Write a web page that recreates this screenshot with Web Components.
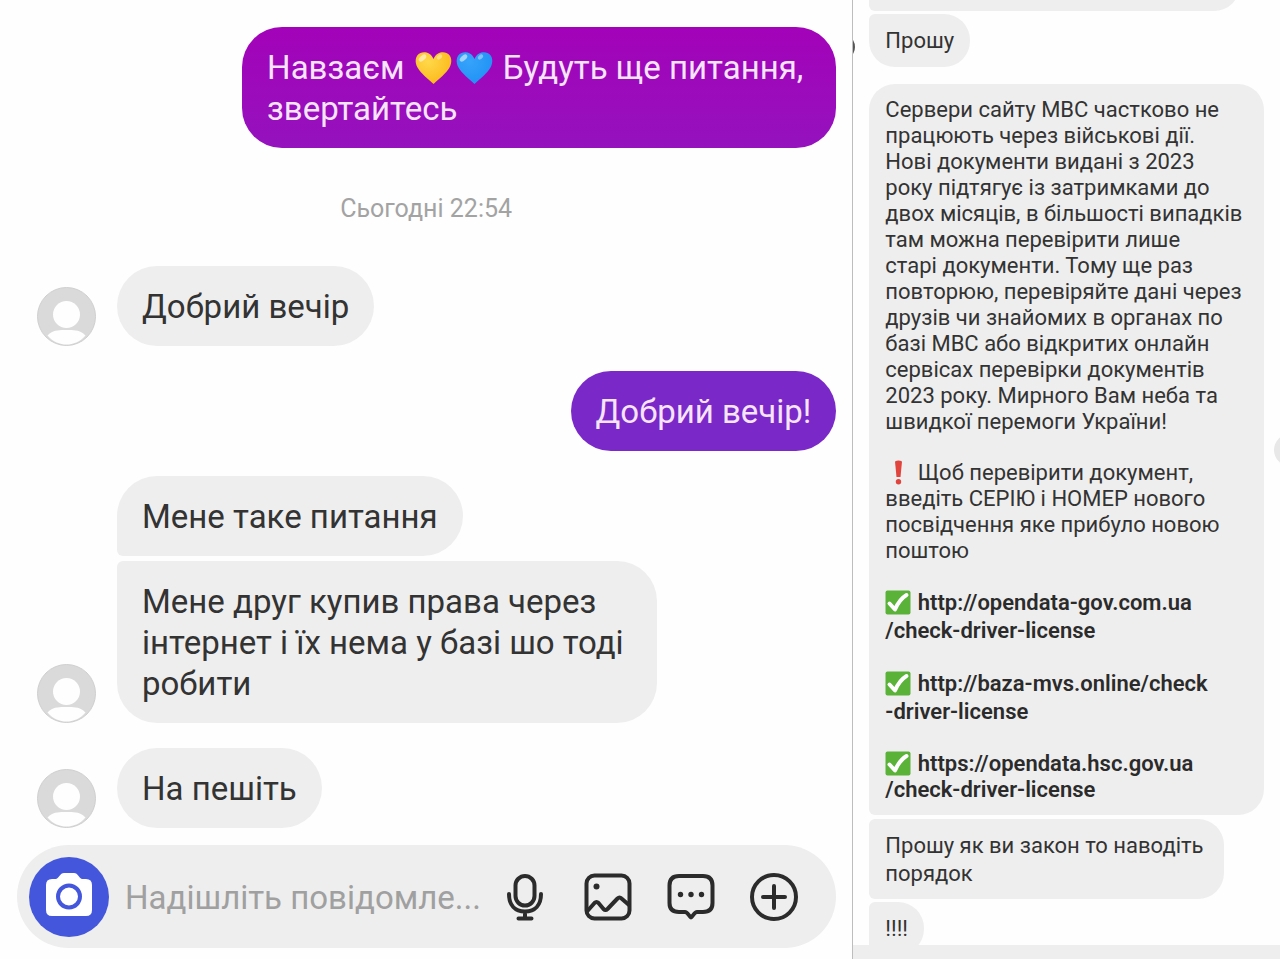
<!DOCTYPE html>
<html lang="uk">
<head>
<meta charset="utf-8">
<meta name="viewport" content="width=device-width, initial-scale=1">
<title>Листування</title>
<style>
  body { margin: 0; background: #fefefe; font-family: Roboto, "Noto Sans", sans-serif; color: #333; }
</style>
</head>
<body>
<chat-app></chat-app>
<script>
const define = (name, html) => {
  const t = document.createElement('template');
  t.innerHTML = html;
  customElements.define(name, class extends HTMLElement {
    constructor() {
      super();
      this.attachShadow({ mode: 'open' }).append(t.content.cloneNode(true));
    }
  });
};

define('chat-bubble', `
  <style>
    :host { display: block; width: fit-content; box-sizing: border-box; background: #eee;
      white-space: nowrap; font-size: 33px; line-height: 41px; padding: 20px 25px 19px; border-radius: 40px; }
    :host([wrapped]) { padding-right: 33px; }
    :host([sent]) { align-self: flex-end; color: #f6e4fa; background: #7b28c8; }
    :host([sent="bright"]) { background: linear-gradient(#a302b9, #9512be); }
    :host([small]) { font-size: 22px; line-height: 28px; padding: 13px 16px 12px; border-radius: 26px; }
    :host([small][wrapped]) { padding: 13px 20px 11px 16px; }
    :host([small][long]) { line-height: 26px; width: auto; }
    :host([join~="top"]) { border-top-left-radius: 6px; }
    :host([join~="bottom"]) { border-bottom-left-radius: 6px; }
  </style><slot></slot>`);

define('user-avatar', `
  <style>:host { display: block; width: 59px; height: 59px; } svg { display: block; }</style>
  <svg width="59" height="59" viewBox="0 0 59 59" aria-hidden="true">
    <circle cx="29.5" cy="29.5" r="29" fill="#dadada" stroke="#cfcfcf"/>
    <circle cx="29.5" cy="27.5" r="13.5" fill="#fefefe"/>
    <path d="M10.500 48.500C16 42.500 23 43 29.500 43S43 42.500 48.500 48.500C43 55 36 57.500 29.500 57.500S16 55 10.500 48.500Z" fill="#fefefe"/>
  </svg>`);

define('message-row', `
  <style>:host { display: flex; align-items: flex-end; gap: 21px; padding-left: 37px; }
    .stack { display: flex; flex-direction: column; gap: 5px; }</style>
  <user-avatar></user-avatar><div class="stack"><slot></slot></div>`);

define('emoji-heart', `
  <style>:host { display: inline-block; width: 41px; height: 34px; vertical-align: -6px; } svg { display: block; }</style>
  <svg width="41" height="34" viewBox="0 0 41 34" role="img">
    <defs><radialGradient id="g" cx=".35" cy=".3" r=".8">
      <stop offset="0" stop-color="var(--heart-light)"/><stop offset="1" stop-color="var(--heart)"/></radialGradient></defs>
    <path d="M20.500 8C17.500 1 11 .5 7.500 2C2 4.500 1.500 11 4.500 16.500C7.500 22 15 28 20.500 33C26 28 33.500 22 36.500 16.500C39.500 11 39 4.500 33.500 2C30 .5 23.500 1 20.500 8Z" fill="url(#g)"/>
    <ellipse cx="9.500" cy="7" rx="4.500" ry="2.500" transform="rotate(-42 9.500 7)" fill="#fff" opacity=".55"/>
    <ellipse cx="26.500" cy="6" rx="3" ry="2" transform="rotate(-42 26.500 6)" fill="#fff" opacity=".4"/>
  </svg>`);

define('emoji-check', `
  <style>:host { display: inline-block; width: 27px; height: 25px; vertical-align: -5px; } svg { display: block; }</style>
  <svg width="27" height="25" viewBox="0 0 27 25" role="img">
    <rect x=".5" y=".5" width="25" height="24" rx="2" fill="#5ab238"/>
    <path d="M4.500 13.500L10 19.500C13 12.500 16.500 8 21.500 5" fill="none" stroke="#fff" stroke-width="4" stroke-linecap="round" stroke-linejoin="round"/>
  </svg>`);

define('emoji-bang', `
  <style>:host { display: inline-block; width: 27px; height: 25px; vertical-align: -5px; } svg { display: block; }</style>
  <svg width="27" height="25" viewBox="0 0 27 25" role="img">
    <path d="M10 1.500Q13.500 -.5 17 1.500L15.500 17H11.500Z" fill="#e0443c"/><circle cx="13.500" cy="21.800" r="2.700" fill="#e0443c"/>
  </svg>`);

define('message-composer', `
  <style>
    :host { display: block; padding: 0 16px 0 17px; }
    form { display: flex; align-items: center; height: 103px; box-sizing: border-box; padding: 0 37px 0 12px; border-radius: 52px; background: #eee; }
    button { border: 0; padding: 0; background: none; flex: none; color: #2b2b2b; cursor: pointer; }
    svg { display: block; fill: none; stroke: currentColor; stroke-width: 4; stroke-linecap: round; stroke-linejoin: round; }
    .camera { width: 80px; height: 80px; border-radius: 50%; background: #4457dc; margin-right: 16px; }
    .tools { display: flex; gap: 33px; }
    input { flex: 1; min-width: 0; height: 48px; border: 0; padding: 2px 0 0; box-sizing: border-box; background: none; outline: 0; font: 33px/41px Roboto, "Noto Sans", sans-serif; color: #333; }
    input::placeholder { color: #a0a0a0; opacity: 1; }
  </style>
  <form>
    <button type="button" class="camera" aria-label="Камера"><svg width="80" height="80" viewBox="0 0 80 80">
      <path d="M23 22H27C30 21 31 16 35 16H45C49 16 50 21 53 22H57Q63 22 63 28V53Q63 59 57 59H23Q17 59 17 53V28Q17 22 23 22Z" fill="#fff" stroke="none"/>
      <circle cx="40" cy="39.500" r="11" stroke="#4457dc" stroke-width="4"/></svg></button>
    <input type="text" aria-label="Повідомлення" placeholder="Надішліть повідомле...">
    <div class="tools">
      <button type="button" aria-label="Голосове повідомлення"><svg width="50" height="50" viewBox="0 0 50 50">
        <rect x="15.500" y="4" width="19" height="29.500" rx="9.500"/><path d="M9 22C9 33 15 39.500 25 39.500S41 33 41 22M25 39.500V46M18.500 46.500H31.500"/></svg></button>
      <button type="button" aria-label="Фото"><svg width="50" height="50" viewBox="0 0 50 50">
        <rect x="3.500" y="3.500" width="43" height="43" rx="8"/><circle cx="13.500" cy="14.500" r="3" fill="currentColor" stroke="none"/><path d="M4 39.500L11.500 31Q13.500 29 15.500 31L20.500 37Q22.500 39 24.500 37L34.500 26.500Q36.500 24.500 38.500 26.500L46 33"/></svg></button>
      <button type="button" aria-label="Швидкі відповіді"><svg width="50" height="50" viewBox="0 0 50 50">
        <path d="M13 4H37Q46.500 4 46.500 13.500V31Q46.500 40 37 40H31C28.500 40 27 44 25 45.500C23 44 21.500 40 19 40H13Q3.500 40 3.500 31V13.500Q3.500 4 13 4Z"/><g fill="currentColor" stroke="none"><circle cx="14.500" cy="22.500" r="2.700"/><circle cx="25" cy="22.500" r="2.700"/><circle cx="35.500" cy="22.500" r="2.700"/></g></svg></button>
      <button type="button" aria-label="Додати"><svg width="50" height="50" viewBox="0 0 50 50">
        <circle cx="25" cy="25" r="22"/><path d="M25 14V36M14 25H36"/></svg></button>
    </div>
  </form>`);

define('chat-main', `
  <style>
    :host { display: flex; flex-direction: column; box-sizing: border-box; padding: 27px 0 11px; border-right: 1px solid #bdbdbd; overflow: hidden; }
    .log { display: flex; flex-direction: column; gap: 25px; margin-bottom: 17px; }
    .log > chat-bubble { margin-right: 16px; }
    time { display: block; text-align: center; font-size: 25px; line-height: 29px; color: #a3a3a3; margin: 21px 0 18px; }
    .yellow { --heart: #fbb616; --heart-light: #ffd84a; }
    .blue { --heart: #1e90f5; --heart-light: #36a3fb; }
  </style>
  <div class="log">
    <chat-bubble sent="bright" wrapped>Навзаєм <emoji-heart class="yellow"></emoji-heart><emoji-heart class="blue"></emoji-heart> Будуть ще питання,<br>звертайтесь</chat-bubble>
    <time>Сьогодні 22:54</time>
    <message-row><chat-bubble>Добрий вечір</chat-bubble></message-row>
    <chat-bubble sent>Добрий вечір!</chat-bubble>
    <message-row>
      <chat-bubble join="bottom">Мене таке питання</chat-bubble>
      <chat-bubble wrapped join="top">Мене друг купив права через<br>інтернет і їх нема у базі шо тоді<br>робити</chat-bubble>
    </message-row>
    <message-row><chat-bubble>На пешіть</chat-bubble></message-row>
  </div>
  <message-composer></message-composer>`);

define('chat-side', `
  <style>
    :host { display: flex; flex-direction: column; position: relative; overflow: hidden; }
    .log { display: flex; flex-direction: column; gap: 3px; padding: 0 16px; }
    .cut { height: 53px; margin: -42px 24px 0 0; background: #eee; border-radius: 26px 26px 26px 6px; }
    .main { margin: 14px 0 1px; }
    p { margin: 0 0 25px; }
    p:last-child { margin: 0; }
    .link { font-weight: 600; line-height: 28px; color: #2b2b2b; }
    .link:last-child { line-height: 26px; }
    a { color: inherit; text-decoration: none; }
    footer { height: 14px; margin-top: -10px; background: #eee; z-index: 1; }
    .dot { position: absolute; left: -9px; top: 38px; width: 11px; height: 18px; border-radius: 50%; background: #555; }
    .knob { position: absolute; right: -26px; top: 434px; width: 32px; height: 32px; border-radius: 50%; background: #e8e8e8; }
  </style>
  <div class="log">
    <div class="cut"></div>
    <chat-bubble small join="top">Прошу</chat-bubble>
    <chat-bubble small long join="bottom" class="main">
      <p>Сервери сайту МВС частково не<br>працюють через військові дії.<br>Нові документи видані з 2023<br>року підтягує із затримками до<br>двох місяців, в більшості випадків<br>там можна перевірити лише<br>старі документи. Тому ще раз<br>повторюю, перевіряйте дані через<br>друзів чи знайомих в органах по<br>базі МВС або відкритих онлайн<br>сервісах перевірки документів<br>2023 року. Мирного Вам неба та<br>швидкої перемоги України!</p>
      <p><emoji-bang></emoji-bang> Щоб перевірити документ,<br>введіть СЕРІЮ і НОМЕР нового<br>посвідчення яке прибуло новою<br>поштою</p>
      <p class="link"><emoji-check></emoji-check> <a href="#opendata-gov">http://opendata-gov.com.ua<br>/check-driver-license</a></p>
      <p class="link"><emoji-check></emoji-check> <a href="#baza-mvs">http://baza-mvs.online/check<br>-driver-license</a></p>
      <p class="link"><emoji-check></emoji-check> <a href="#opendata-hsc">https://opendata.hsc.gov.ua<br>/check-driver-license</a></p>
    </chat-bubble>
    <chat-bubble small wrapped join="top bottom">Прошу як ви закон то наводіть<br>порядок</chat-bubble>
    <chat-bubble small join="top bottom">!!!!</chat-bubble>
  </div>
  <footer></footer>
  <span class="dot"></span><span class="knob"></span>`);

define('chat-app', `
  <style>:host { display: grid; grid-template-columns: minmax(0, 2fr) minmax(0, 1fr); min-height: 100vh; }</style>
  <chat-main></chat-main><chat-side></chat-side>`);
</script>
</body>
</html>
